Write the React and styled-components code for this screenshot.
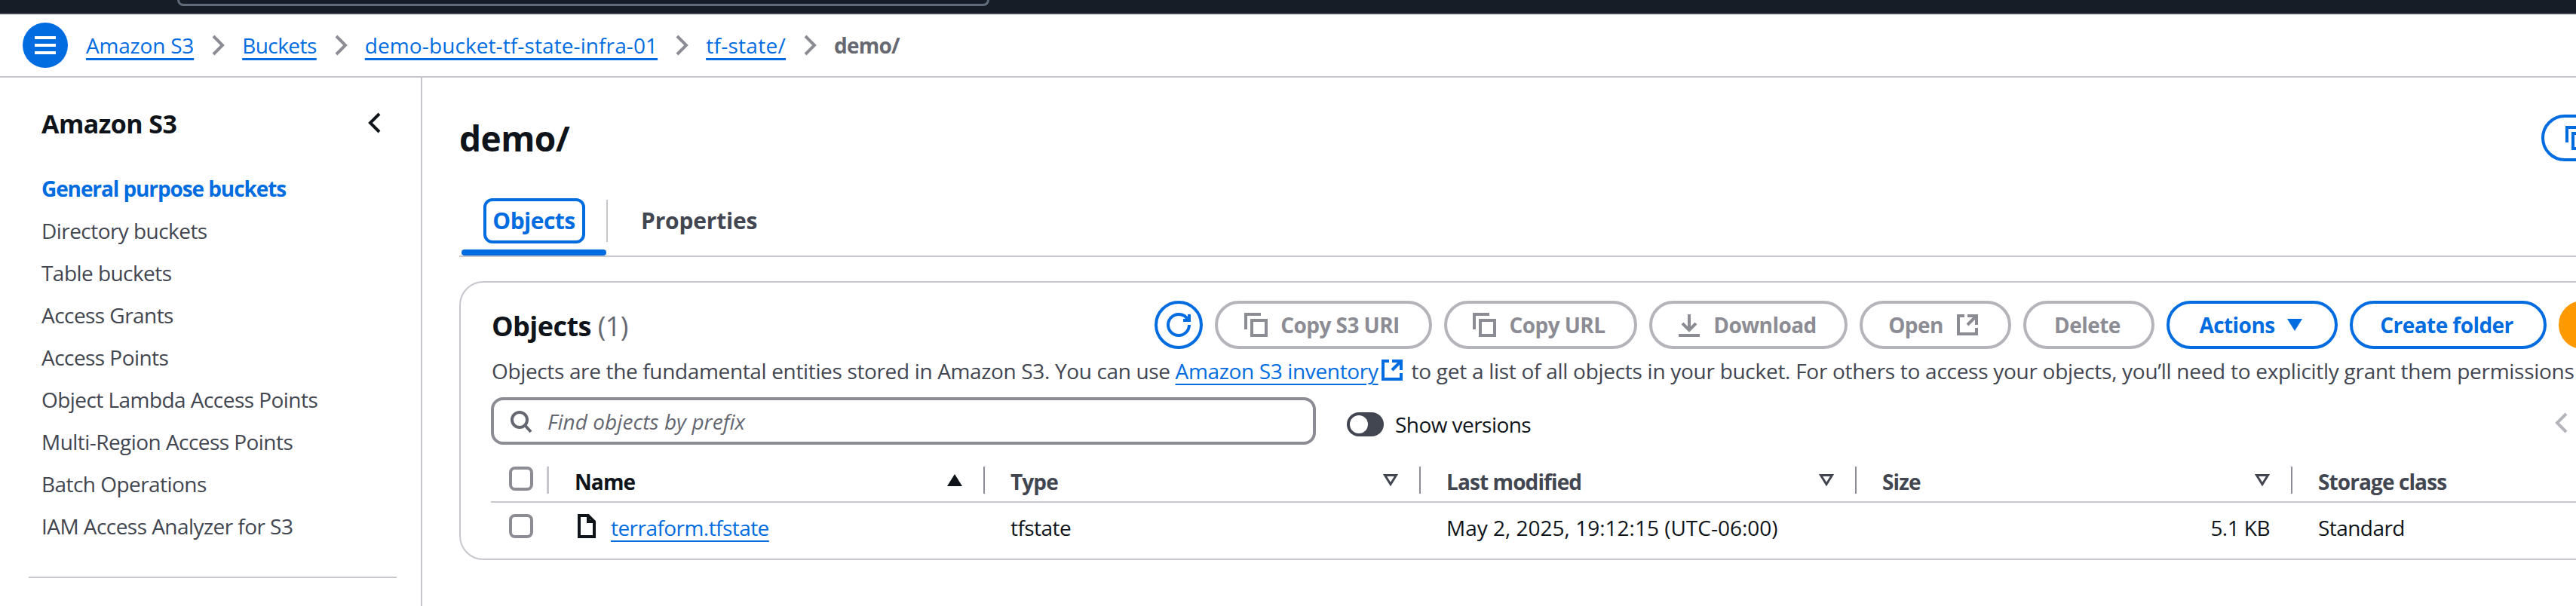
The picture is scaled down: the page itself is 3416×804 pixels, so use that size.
import { Fragment } from "react";
import styled, { createGlobalStyle, css } from "styled-components";

const BLUE = "#006ce0";
const INK = "#0f141a";
const BODY = "#424650";
const LINE = "#c6c6cd";
const MUTED = "#8c8c94";
const OFF = "#b4b4bb";

const GlobalStyle = createGlobalStyle`
  html, body {
    margin: 0;
    width: 3416px;
    height: 804px;
    overflow: hidden;
    background: #fff;
  }
  body {
    font-family: "Open Sans", "Liberation Sans", sans-serif;
    font-size: 28px;
    line-height: 40px;
    letter-spacing: -0.55px;
    color: ${INK};
  }
`;

/* top dark strip */
const TopBar = styled.div`
  height: 17px;
  background: #161d26;
  border-bottom: 2px solid #3f4651;
`;

const TopSearch = styled.div`
  width: 1071px;
  height: 5px;
  margin-left: 235px;
  border: 3px solid #5f6b7a;
  border-top: none;
  border-radius: 0 0 10px 10px;
`;

const Crumbs = styled.nav`
  display: flex;
  align-items: center;
  gap: 16px;
  height: 82px;
  padding-left: 30px;
  border-bottom: 2px solid ${LINE};
`;

const MenuButton = styled.div`
  display: flex;
  align-items: center;
  justify-content: center;
  width: 60px;
  height: 60px;
  margin-right: 8px;
  border-radius: 50%;
  background: ${BLUE};
  color: #fff;
`;

const Link = styled.a`
  color: ${BLUE};
  text-decoration: underline;
  text-decoration-thickness: 2px;
  text-underline-offset: 6px;
`;

const CrumbLink = styled(Link)`
  letter-spacing: ${(p) => p.$spacing}px;
  text-decoration-thickness: 3px;
`;

const CrumbCurrent = styled.span`
  color: #656871;
  font-weight: 700;
  letter-spacing: -0.8px;
`;

const Layout = styled.div`
  display: flex;
  height: 701px;
`;

const Sidebar = styled.aside`
  flex: none;
  width: 558px;
  border-right: 2px solid ${LINE};
`;

const SideHead = styled.div`
  display: flex;
  justify-content: space-between;
  align-items: flex-start;
  padding: 44px 45px 0 55px;
  font-size: 34px;
  font-weight: 700;
  line-height: 34px;
`;

const SideNav = styled.ul`
  list-style: none;
  margin: 41px 0 0;
  padding: 0 0 0 55px;
`;

const SideItem = styled.li`
  height: 56px;
  line-height: 56px;
  color: ${(p) => (p.$active ? BLUE : BODY)};
  font-weight: ${(p) => (p.$active ? 700 : 400)};
  letter-spacing: ${(p) => (p.$active ? "-1.1px" : "inherit")};
`;

const SideRule = styled.hr`
  width: 488px;
  height: 2px;
  margin: 39px 0 0 38px;
  border: none;
  background: ${LINE};
`;

const Main = styled.main`
  flex: 1;
  min-width: 0;
  padding-left: 49px;
  overflow: hidden;
`;

const PageHead = styled.div`
  display: flex;
  justify-content: space-between;
  align-items: center;
  width: 2841px;
  height: 62px;
  margin-top: 49px;
`;

const PageTitle = styled.h1`
  margin: 0;
  font-size: 46px;
  line-height: 62px;
  font-weight: 700;
`;

const Tabs = styled.div`
  display: flex;
  align-items: flex-start;
  height: 76px;
  margin-top: 49px;
  padding-left: 3px;
  border-bottom: 2px solid ${LINE};
`;

const ActiveTab = styled.div`
  display: flex;
  flex-direction: column;
  align-items: center;
  gap: 8px;
  width: 192px;
  height: 76px;
`;

const TabRing = styled.span`
  box-sizing: border-box;
  width: 135px;
  height: 60px;
  border: 4px solid ${BLUE};
  border-radius: 12px;
  color: ${BLUE};
  font-size: 30px;
  font-weight: 700;
  line-height: 52px;
  text-align: center;
`;

const TabBar = styled.span`
  width: 100%;
  height: 8px;
  border-radius: 4px;
  background: ${BLUE};
`;

const TabDivider = styled.span`
  width: 2px;
  height: 56px;
  margin-top: 2px;
  background: ${LINE};
`;

const Tab = styled.span`
  margin-left: 44px;
  color: ${BODY};
  font-size: 30px;
  font-weight: 700;
  letter-spacing: -0.2px;
  line-height: 60px;
`;

const Card = styled.section`
  box-sizing: border-box;
  width: 2980px;
  height: 370px;
  margin-top: 32px;
  padding: 24px 44px 0 41px;
  border: 2px solid ${LINE};
  border-radius: 32px;
`;

const Toolbar = styled.div`
  display: flex;
  align-items: center;
  gap: 16px;
  height: 64px;
`;

const CardTitle = styled.h2`
  margin: 4px auto 0 0;
  font-size: 36px;
  font-weight: 700;
  line-height: 44px;
`;

const Count = styled.span`
  color: #656871;
  font-weight: 400;
`;

const Button = styled.button`
  box-sizing: border-box;
  display: flex;
  flex: none;
  align-items: center;
  justify-content: center;
  gap: 16px;
  width: ${(p) => p.$width}px;
  height: 64px;
  padding: 0 4px 0 0;
  background: #fff;
  border: 4px solid ${(p) => (p.$disabled ? OFF : BLUE)};
  border-radius: 32px;
  color: ${(p) => (p.$disabled ? MUTED : BLUE)};
  font: inherit;
  font-weight: 700;
  letter-spacing: inherit;
`;

const RoundButton = styled(Button)`
  padding: 0;
`;

const UploadButton = styled(Button)`
  background: #ff9900;
  border-color: #ff9900;
  color: ${INK};
`;

const HeadButton = styled(Button)`
  height: 62px;
  justify-content: flex-start;
  padding-left: 28px;
`;

const Description = styled.p`
  margin: 9px 0 0;
  color: ${BODY};
  white-space: nowrap;
  letter-spacing: -0.35px;
  line-height: 40px;
`;

const DescriptionTail = styled.span`
  letter-spacing: -0.28px;
`;

const Inline = styled.span`
  display: inline-flex;
  margin: 0 10px 0 2px;
  color: ${BLUE};
  vertical-align: -4px;
`;

const FilterRow = styled.div`
  display: flex;
  align-items: flex-start;
  height: 63px;
  margin-top: 15px;
  margin-left: -1px;
`;

const SearchBox = styled.div`
  box-sizing: border-box;
  display: flex;
  align-items: center;
  gap: 19px;
  width: 1094px;
  height: 63px;
  padding-left: 20px;
  border: 4px solid ${MUTED};
  border-radius: 16px;
  color: #656871;
  font-style: italic;
  letter-spacing: 0.05px;
`;

const ToggleWrap = styled.label`
  display: flex;
  align-items: center;
  gap: 15px;
  height: 32px;
  margin: 20px 0 0 41px;
`;

const Track = styled.span`
  display: block;
  box-sizing: border-box;
  width: 49px;
  height: 32px;
  padding: 4px;
  border-radius: 16px;
  background: ${BODY};
`;

const Knob = styled.span`
  display: block;
  width: 24px;
  height: 24px;
  border-radius: 50%;
  background: #fff;
`;

const Pager = styled.span`
  display: flex;
  margin: 18px 130px 0 auto;
  color: ${OFF};
`;

const columns = css`
  display: grid;
  grid-template-columns: 77px repeat(4, 578px) 1fr;
  margin-left: -1px;
  border-bottom: 2px solid ${LINE};
`;

const HeadRow = styled.div`
  ${columns}
  height: 46px;
  margin-top: 29px;
  margin-right: -44px;
`;

const HeadCell = styled.div`
  display: flex;
  align-items: flex-start;
  justify-content: space-between;
  height: 36px;
  padding: 0 28px 0 34px;
  border-right: ${(p) => (p.$last ? "none" : `2px solid ${MUTED}`)};
  color: ${(p) => (p.$sorted ? INK : BODY)};
  font-weight: 700;
  letter-spacing: -0.9px;
  box-sizing: border-box;
`;

const CheckCell = styled.div`
  box-sizing: border-box;
  height: 36px;
  padding-left: 24px;
  border-right: ${(p) => (p.$head ? `3px solid ${LINE}` : "none")};
`;

const Checkbox = styled.span`
  display: block;
  box-sizing: border-box;
  width: 32px;
  height: 32px;
  border: 4px solid ${MUTED};
  border-radius: 8px;
`;

const SortIcon = styled.span`
  display: flex;
  margin-top: 10px;
  color: ${(p) => (p.$sorted ? INK : BODY)};
`;

const BodyRow = styled.div`
  ${columns}
  height: 59px;
  padding-top: 15px;
  margin-right: -44px;
  border-bottom: none;
`;

const BodyCell = styled.div`
  box-sizing: border-box;
  display: flex;
  gap: 16px;
  justify-content: ${(p) => (p.$right ? "flex-end" : "flex-start")};
  padding: ${(p) => (p.$right ? "0 30px 0 0" : "0 0 0 34px")};
  letter-spacing: ${(p) => (p.$wide ? "0" : "inherit")};
  line-height: 37px;
`;

const Stroke = ({ size = 32, children, width = 2 }) => (
  <svg
    width={size}
    height={size}
    viewBox="0 0 16 16"
    fill="none"
    stroke="currentColor"
    strokeWidth={width}
  >
    {children}
  </svg>
);

const Angle = ({ left }) => (
  <Stroke>
    <path d={left ? "M11 2 5 8l6 6" : "M5 2l6 6-6 6"} />
  </Stroke>
);

const CrumbAngle = styled.span`
  display: flex;
  color: ${MUTED};
`;

const CopyIcon = () => (
  <Stroke>
    <path d="M1 11V1h10" />
    <path d="M5 5h9.5v10H5z" />
  </Stroke>
);

const ExternalIcon = () => (
  <Stroke>
    <path d="M14 8.01v-6H8" />
    <path d="M14.02 2 8 8.01" />
    <path d="M6 2.01H2v12h12v-3.99" />
  </Stroke>
);

const crumbs = [
  { label: "Amazon S3", spacing: -0.2 },
  { label: "Buckets", spacing: -0.55 },
  { label: "demo-bucket-tf-state-infra-01", spacing: 0.1 },
  { label: "tf-state/", spacing: 0.3 },
];

const navItems = [
  "General purpose buckets",
  "Directory buckets",
  "Table buckets",
  "Access Grants",
  "Access Points",
  "Object Lambda Access Points",
  "Multi-Region Access Points",
  "Batch Operations",
  "IAM Access Analyzer for S3",
];

const SortDown = () => (
  <svg width="20" height="16" viewBox="0 0 20 16" fill="none" stroke="currentColor" strokeWidth="3">
    <path d="M2.5 1.5h15L10 13.5z" />
  </svg>
);

const SortUp = () => (
  <svg width="20" height="16" viewBox="0 0 20 16" fill="currentColor">
    <path d="M10 0 20 16H0z" />
  </svg>
);

const App = () => {
  return (
    <>
      <GlobalStyle />
      <TopBar>
        <TopSearch />
      </TopBar>
      <Crumbs>
        <MenuButton>
          <svg width="28" height="24" viewBox="0 0 28 24" fill="currentColor">
            <rect y="0" width="28" height="4" />
            <rect y="10" width="28" height="4" />
            <rect y="20" width="28" height="4" />
          </svg>
        </MenuButton>
        {crumbs.map((c) => (
          <Fragment key={c.label}>
            <CrumbLink $spacing={c.spacing}>{c.label}</CrumbLink>
            <CrumbAngle>
              <Angle />
            </CrumbAngle>
          </Fragment>
        ))}
        <CrumbCurrent>demo/</CrumbCurrent>
      </Crumbs>
      <Layout>
        <Sidebar>
          <SideHead>
            Amazon S3
            <Angle left />
          </SideHead>
          <SideNav>
            {navItems.map((item, i) => (
              <SideItem key={item} $active={i === 0}>
                {item}
              </SideItem>
            ))}
          </SideNav>
          <SideRule />
        </Sidebar>
        <Main>
          <PageHead>
            <PageTitle>demo/</PageTitle>
            <HeadButton $width={80}>
              <CopyIcon />
            </HeadButton>
          </PageHead>
          <Tabs>
            <ActiveTab>
              <TabRing>Objects</TabRing>
              <TabBar />
            </ActiveTab>
            <TabDivider />
            <Tab>Properties</Tab>
          </Tabs>
          <Card>
            <Toolbar>
              <CardTitle>
                Objects <Count>(1)</Count>
              </CardTitle>
              <RoundButton $width={64}>
                <Stroke>
                  <path d="M15 8c0 3.87-3.13 7-7 7s-7-3.13-7-7 3.13-7 7-7c2.79 0 5.2 1.63 6.33 4" />
                  <path d="M15 1v4h-4" />
                </Stroke>
              </RoundButton>
              <Button $width={288} $disabled>
                <CopyIcon />
                Copy S3 URI
              </Button>
              <Button $width={256} $disabled>
                <CopyIcon />
                Copy URL
              </Button>
              <Button $width={263} $disabled>
                <Stroke>
                  <path d="M8 1v10" />
                  <path d="M3.5 7 8 11.5 12.5 7" />
                  <path d="M1 15h14" />
                </Stroke>
                Download
              </Button>
              <Button $width={201} $disabled>
                Open
                <ExternalIcon />
              </Button>
              <Button $width={174} $disabled>
                Delete
              </Button>
              <Button $width={227}>
                Actions
                <svg width="20" height="16" viewBox="0 0 20 16" fill="currentColor">
                  <path d="M0 0h20L10 16z" />
                </svg>
              </Button>
              <Button $width={261}>Create folder</Button>
              <UploadButton $width={150} />
            </Toolbar>
            <Description>
              Objects are the fundamental entities stored in Amazon S3. You can use{" "}
              <Link>Amazon S3 inventory</Link>
              <Inline>
                <ExternalIcon />
              </Inline>
              <DescriptionTail>
                to get a list of all objects in your bucket. For others to access your objects,
                you’ll need to explicitly grant them permissions
              </DescriptionTail>
            </Description>
            <FilterRow>
              <SearchBox>
                <Stroke>
                  <circle cx="7" cy="7" r="5" />
                  <path d="M10.5 10.5 14.5 15" />
                </Stroke>
                Find objects by prefix
              </SearchBox>
              <ToggleWrap>
                <Track>
                  <Knob />
                </Track>
                Show versions
              </ToggleWrap>
              <Pager>
                <Angle left />
              </Pager>
            </FilterRow>
            <HeadRow>
              <CheckCell $head>
                <Checkbox />
              </CheckCell>
              <HeadCell $sorted>
                Name
                <SortIcon $sorted>
                  <SortUp />
                </SortIcon>
              </HeadCell>
              {["Type", "Last modified", "Size"].map((name) => (
                <HeadCell key={name}>
                  {name}
                  <SortIcon>
                    <SortDown />
                  </SortIcon>
                </HeadCell>
              ))}
              <HeadCell $last>Storage class</HeadCell>
            </HeadRow>
            <BodyRow>
              <CheckCell>
                <Checkbox />
              </CheckCell>
              <BodyCell>
                <Stroke>
                  <path d="M13 15H3V1h6l4 4z" />
                  <path d="M9 1v4h4" />
                </Stroke>
                <Link>terraform.tfstate</Link>
              </BodyCell>
              <BodyCell>tfstate</BodyCell>
              <BodyCell $wide>May 2, 2025, 19:12:15 (UTC-06:00)</BodyCell>
              <BodyCell $right>5.1 KB</BodyCell>
              <BodyCell>Standard</BodyCell>
            </BodyRow>
          </Card>
        </Main>
      </Layout>
    </>
  );
};

export default App;
